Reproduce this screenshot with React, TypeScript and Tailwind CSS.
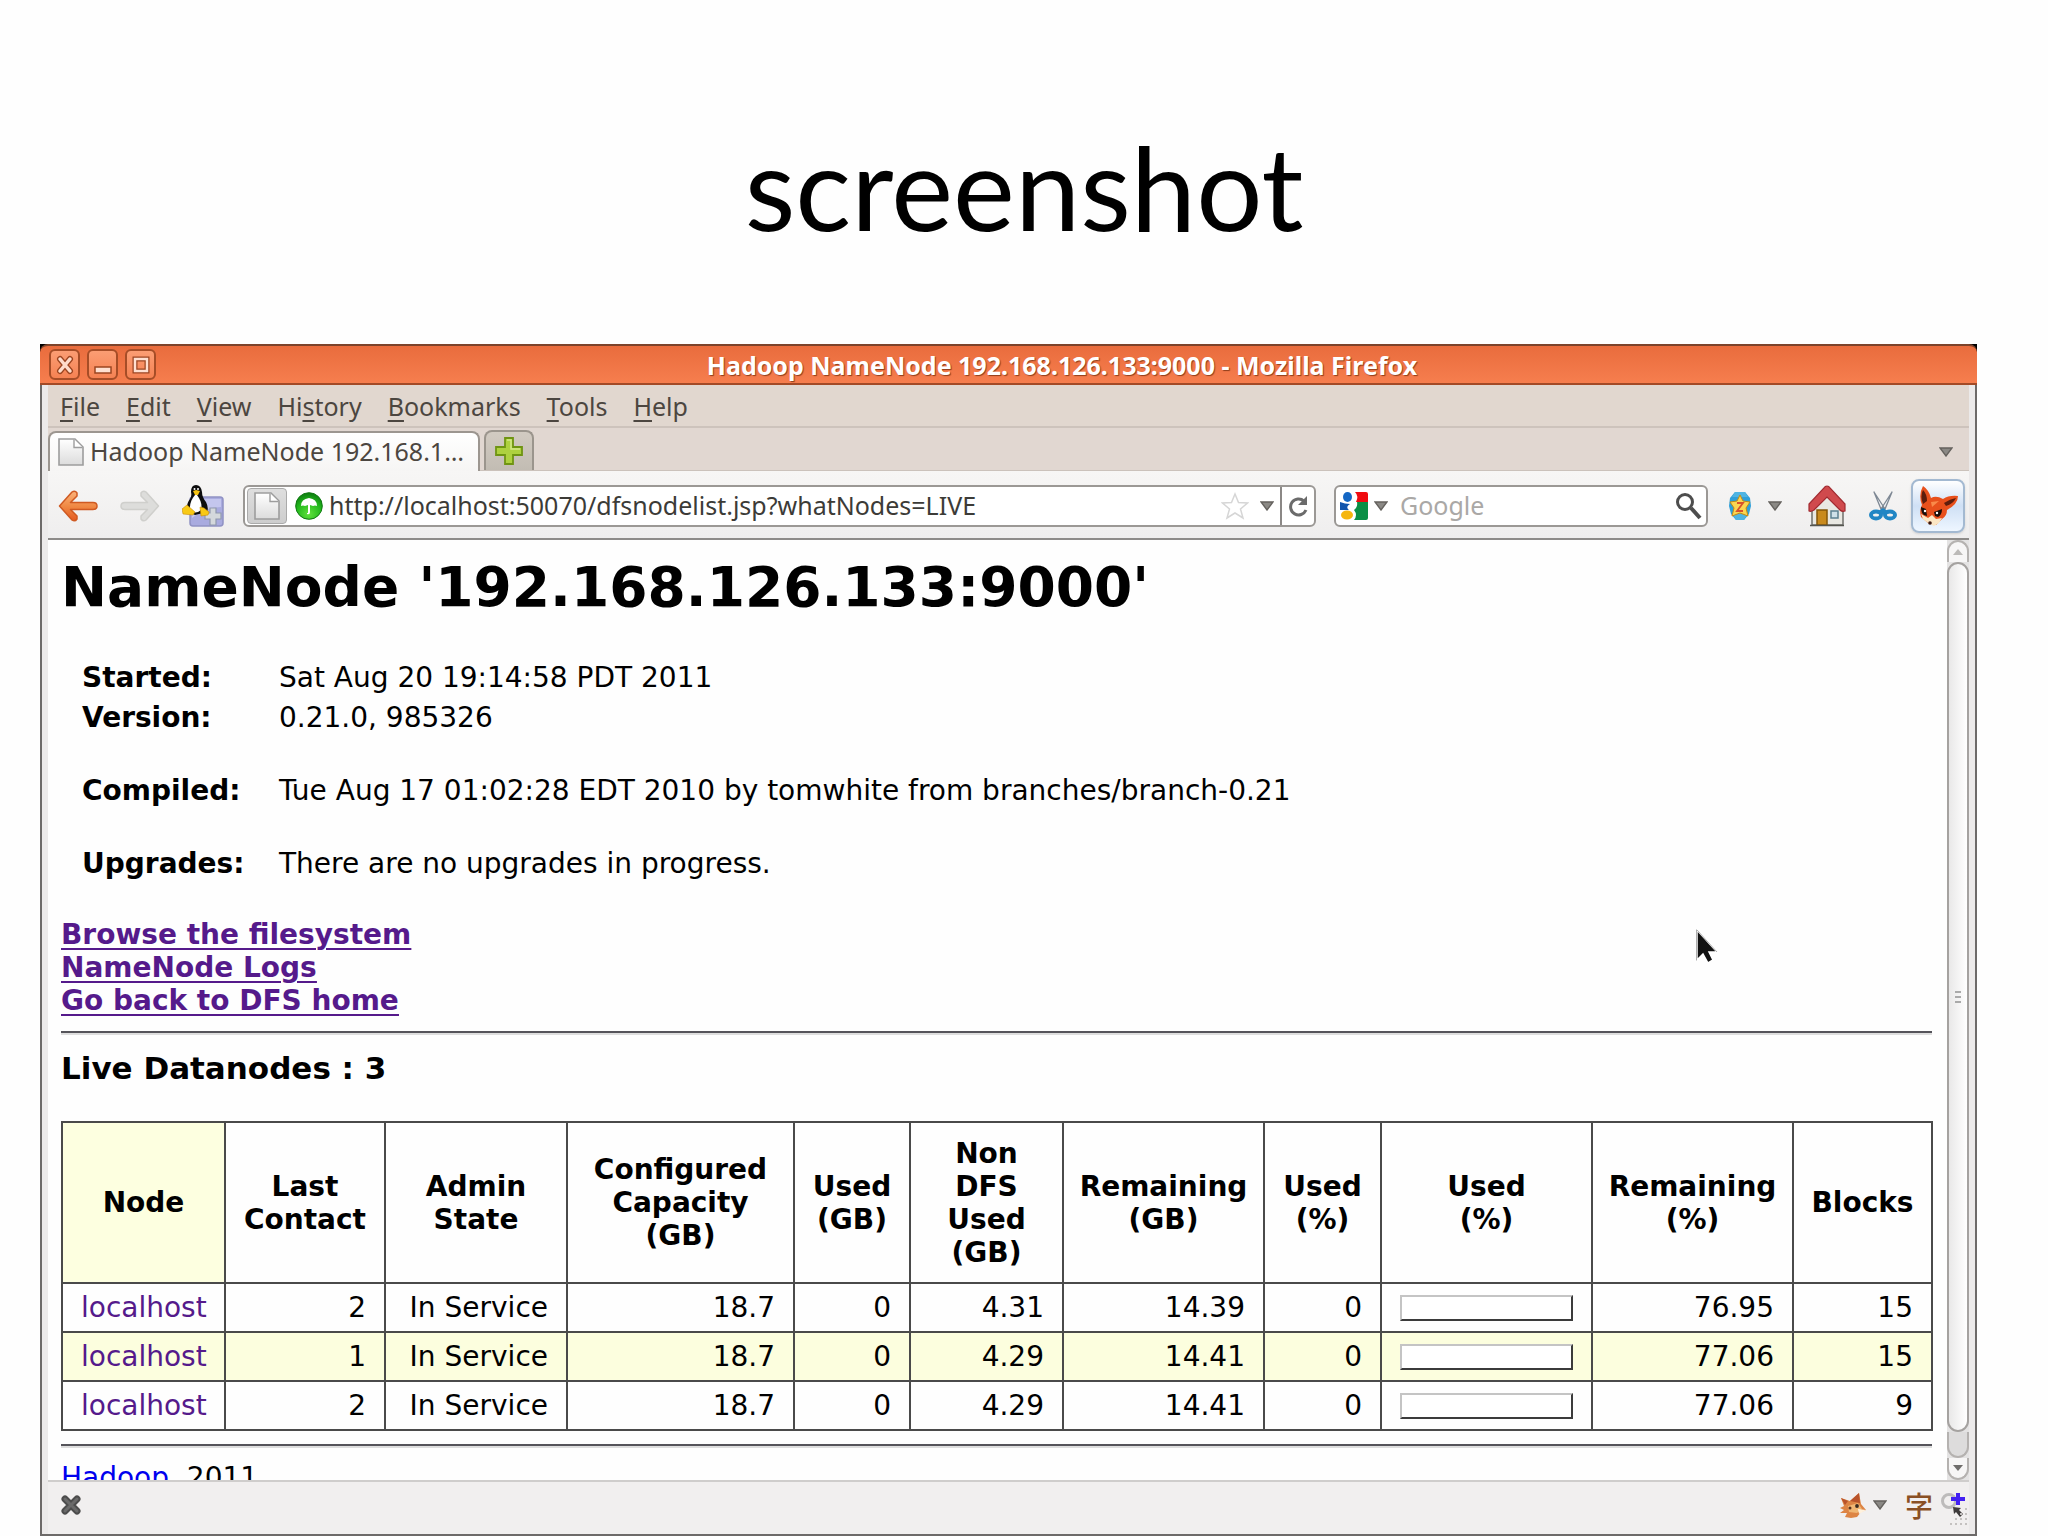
import type { ReactNode } from 'react';

const MENUS = [
  { before: '', key: 'F', after: 'ile' },
  { before: '', key: 'E', after: 'dit' },
  { before: '', key: 'V', after: 'iew' },
  { before: 'Hi', key: 's', after: 'tory' },
  { before: '', key: 'B', after: 'ookmarks' },
  { before: '', key: 'T', after: 'ools' },
  { before: '', key: 'H', after: 'elp' },
];

const COLUMNS = [
  { lines: ['Node'], width: 'w-[163px]' },
  { lines: ['Last', 'Contact'], width: 'w-[160px]' },
  { lines: ['Admin', 'State'], width: 'w-[182px]' },
  { lines: ['Configured', 'Capacity', '(GB)'], width: 'w-[227px]' },
  { lines: ['Used', '(GB)'], width: 'w-[116px]' },
  { lines: ['Non', 'DFS', 'Used', '(GB)'], width: 'w-[153px]' },
  { lines: ['Remaining', '(GB)'], width: 'w-[201px]' },
  { lines: ['Used', '(%)'], width: 'w-[117px]' },
  { lines: ['Used', '(%)'], width: 'w-[211px]' },
  { lines: ['Remaining', '(%)'], width: 'w-[201px]' },
  { lines: ['Blocks'], width: 'w-[139px]' },
];

const NODES = [
  { contact: '2', capacity: '18.7', used: '0', nonDfs: '4.31', remaining: '14.39', usedPct: 0, remainingPct: '76.95', blocks: '15' },
  { contact: '1', capacity: '18.7', used: '0', nonDfs: '4.29', remaining: '14.41', usedPct: 0, remainingPct: '77.06', blocks: '15' },
  { contact: '2', capacity: '18.7', used: '0', nonDfs: '4.29', remaining: '14.41', usedPct: 0, remainingPct: '77.06', blocks: '9' },
];

function Caret({ className = '' }: { className?: string }) {
  return (
    <svg viewBox="0 0 14 10" className={`h-[10px] w-[14px] shrink-0 ${className}`} aria-hidden="true">
      <path d="M1 1h12L7 9z" fill="#8b8985" stroke="#65625e" strokeWidth="1.4" />
    </svg>
  );
}

function PageIcon({ className = '' }: { className?: string }) {
  return (
    <svg viewBox="0 0 26 28" className={`h-7 w-[26px] shrink-0 ${className}`} aria-hidden="true">
      <defs>
        <linearGradient id="paper" x1="0" y1="0" x2="0" y2="1">
          <stop offset="0" stopColor="#fff" />
          <stop offset="1" stopColor="#dcdcdc" />
        </linearGradient>
      </defs>
      <path d="M1 1h16l8 8v18H1z" fill="url(#paper)" stroke="#9d9d9d" strokeWidth="1.6" />
      <path d="M16 1.500v8h8.500" fill="#fff" stroke="#9d9d9d" strokeWidth="1.4" />
    </svg>
  );
}

function ArrowIcon({ flip = false }: { flip?: boolean }) {
  return (
    <svg viewBox="0 0 40 32" className="h-8 w-10" aria-hidden="true">
      <defs>
        <linearGradient id="orangeArrow" x1="0" y1="0" x2="0" y2="1">
          <stop offset="0" stopColor="#fbb27a" />
          <stop offset="0.5" stopColor="#f08a45" />
          <stop offset="1" stopColor="#e55a20" />
        </linearGradient>
      </defs>
      <path
        d="M1.500 16 14 2q3-2 5 1v3l-6.500 6.500H35q4 0 4 3.500t-4 3.500H12.500L19 26v3q-2 3-5 1z"
        transform={flip ? 'matrix(-1 0 0 1 40 0)' : undefined}
        fill={flip ? '#dddddb' : 'url(#orangeArrow)'}
        stroke={flip ? '#cfcfcc' : '#cf5a22'}
        strokeWidth="1.5"
        strokeLinejoin="round"
      />
    </svg>
  );
}

function PenguinIcon() {
  return (
    <svg viewBox="0 0 42 42" className="h-[42px] w-[42px]" aria-hidden="true">
      <rect x="8" y="12" width="33" height="29" rx="3" fill="#a9abdf" stroke="#9092c4" strokeWidth="1.5" />
      <path d="M10 14h29v8q-15 0-29 11z" fill="#c4c6ee" />
      <path d="M28 23h6v5h5v6h-5v6h-6v-6h-5v-6h5z" fill="#d4d8dc" stroke="#8f98ad" strokeWidth="1.2" />
      <path d="M9 7q0-7 5-7t6 7q0 5 4 10 3 6 1 10l-12 3-8-4q-1-7 3-12 2-3 1-7z" fill="#0d0d0d" />
      <path d="M13 10q-6 7-5 15 5 5 11 0 2-7-4-15z" fill="#fff" />
      <path d="m11 6 3-1 4 1-2 4h-3z" fill="#f5c211" />
      <circle cx="12.500" cy="4" r="1" fill="#fff" />
      <circle cx="16" cy="4" r="1" fill="#fff" />
      <path d="m0 24 5-4 8 7-2 3-10-1zM18 22l4 1 5 4-1 3-7 1z" fill="#f8c915" stroke="#c98f08" strokeWidth=".6" />
    </svg>
  );
}

function UmbrellaIcon() {
  return (
    <svg viewBox="0 0 28 28" className="h-7 w-7 shrink-0" aria-hidden="true">
      <defs>
        <radialGradient id="greenBall" cx=".5" cy=".8" r=".8">
          <stop offset="0" stopColor="#5fe03c" />
          <stop offset=".6" stopColor="#22b81c" />
          <stop offset="1" stopColor="#0c7a10" />
        </radialGradient>
      </defs>
      <circle cx="14" cy="14" r="13.300" fill="url(#greenBall)" stroke="#127a14" />
      <path d="M6 14q0-7 8-8 8 1 8 8-2-1-4 0l-3-1v7q0 3-3 2v-1h1v-8l-3 1q-2-1-4 0z" fill="#fff" />
    </svg>
  );
}

function GoogleIcon() {
  return (
    <svg viewBox="0 0 28 28" className="h-7 w-7 shrink-0" aria-hidden="true">
      <path d="M16 0h10q2 0 2 2v8H16q3-6-1-10z" fill="#f00b10" />
      <path d="M17 10h11v16q0 2-2 2H14q4-5 0-10 4-3 3-8z" fill="#0a8f45" />
      <ellipse cx="7.500" cy="5" rx="4.500" ry="5" fill="#1467c4" />
      <path d="M0 10q5 2 10 2-5 3-1 6H0z" fill="#1155ad" />
      <ellipse cx="7" cy="23" rx="6" ry="4.600" fill="#f5b60d" />
    </svg>
  );
}

function StarGlobeIcon() {
  return (
    <svg viewBox="0 0 24 30" className="h-[30px] w-6" aria-hidden="true">
      <path d="m7 1 10 0 5 6 1 8-2 8-5 6H8l-5-6-2-8 1-8z" fill="#2f9fd8" />
      <path d="M7 1h10l3 5H4zM4 22h16l-4 7H8z" fill="#4fb4e2" />
      <path d="m12 4 3 6 7 1-4 6 2 8-8-3-8 3 2-8-4-6 7-1z" fill="#fbd551" stroke="#c28a14" />
      <path d="M9 12h6l-6 8h6" fill="none" stroke="#d8512c" strokeWidth="1.8" />
    </svg>
  );
}

function HouseIcon() {
  return (
    <svg viewBox="0 0 38 42" className="h-[42px] w-[38px]" aria-hidden="true">
      <path d="M4 20 19 8l16 12v20H4z" fill="#e9e8e2" stroke="#6f6f6b" strokeWidth="1.500" />
      <path d="M19 1q2 0 3 2l15 16v7q-3 1-5-1L19 12 6 25q-3 2-5 1v-7L16 3q1-2 3-2z" fill="#d04a4d" stroke="#a12a30" strokeWidth="1.200" />
      <rect x="9" y="25" width="10" height="15" fill="#c98a1d" stroke="#845608" strokeWidth="1.500" />
      <rect x="23" y="26" width="7" height="7" fill="#cfe0e8" stroke="#5c8091" strokeWidth="1.500" />
      <path d="M2 40.500h34" stroke="#55564f" strokeWidth="1.500" />
    </svg>
  );
}

function ScissorsIcon() {
  return (
    <svg viewBox="0 0 28 30" className="h-[30px] w-7" aria-hidden="true">
      <path d="m5 1 11 17h-4zM23 1 12 18h4z" fill="#eef1f4" stroke="#7d8793" strokeWidth="1.300" strokeLinejoin="round" />
      <ellipse cx="7" cy="24" rx="5" ry="3.500" fill="none" stroke="#2186c4" strokeWidth="4" />
      <ellipse cx="21" cy="24" rx="5" ry="3.500" fill="none" stroke="#2186c4" strokeWidth="4" />
      <path d="m9 20 5-3 5 3-5 4z" fill="#2186c4" />
    </svg>
  );
}

function FoxIcon() {
  return (
    <svg viewBox="0 0 42 42" className="h-[42px] w-[42px]" aria-hidden="true">
      <path d="M6 1q6 4 8 12 5-3 12 1 6-4 15-3 0 8-11 14 0 6-5 9l-6 6-8-2-7-6q-2-7 1-12Q1 10 6 1z" fill="#e8501c" />
      <path d="M6 5q4 4 4 11l-4 3Q3 11 6 5zM39 13q-3 6-10 8l-2-3q6-4 12-5z" fill="#5d1d0d" />
      <path d="m4 29 7 4 4-3 4 4 6-1-3 5-5 3-6-3-5-4z" fill="#fbe6c4" />
      <path d="m4 22 5 2 1 7-3-1q-3-2-3-8zM17 27l8-3q0 6-4 8l-3-1z" fill="#1a0e0a" />
      <circle cx="8" cy="26" r="1.200" fill="#fff" />
      <circle cx="20" cy="28" r="1.200" fill="#fff" />
      <circle cx="13" cy="38" r="1.800" fill="#3a140c" />
      <path d="m14 17 8-1-7 6z" fill="#f98a4a" />
    </svg>
  );
}

function FoxFaceIcon() {
  return (
    <svg viewBox="0 0 28 27" className="h-[27px] w-7" aria-hidden="true">
      <path d="m2 6 9 3 9-8 2 11 5 6-5 2-4 5-6 1-6-1 2-4-7 0 4-3-4-2 4-2z" fill="#dd8444" />
      <path d="m11 9 9-8 1 10zM2 6l7 3-3 4z" fill="#b9532b" />
      <path d="m9 14 10-3 4 6-5 4-8-1z" fill="#f0b673" />
      <path d="m19 17 8 1-7 4z" fill="#fff1dd" />
      <circle cx="18" cy="14" r="1.900" fill="#3b2a1f" />
      <circle cx="11" cy="16" r="1.500" fill="#5b321d" />
    </svg>
  );
}

function ZoomPlusIcon() {
  return (
    <svg viewBox="0 0 24 27" className="h-[27px] w-6" aria-hidden="true">
      <circle cx="8" cy="9" r="6.500" fill="none" stroke="#bdbbbb" strokeWidth="3" />
      <path d="m12 15 8 1-2 2 4 4-3 3-4-5-2 2z" fill="#3e3a3a" />
      <path d="M15 1h4v4h5v4h-5v4h-4V9h-5V5h5z" fill="#4320f2" />
    </svg>
  );
}

function TitleButton({ label, children }: { label: string; children: ReactNode }) {
  return (
    <button
      type="button"
      aria-label={label}
      className="flex h-[31px] w-[31px] items-center justify-center rounded-md border-2 border-[#a64d27] bg-linear-to-b from-[#fb9d73] to-[#f58253]"
    >
      <svg viewBox="0 0 20 20" className="h-5 w-5" fill="none" aria-hidden="true">
        {children}
      </svg>
    </button>
  );
}

function TitleBar() {
  return (
    <div className="flex h-[41px] shrink-0 items-center rounded-t-lg border-t-2 border-b-2 border-t-[#7c432b] border-b-[#a34a26] bg-linear-to-b from-[#e96c3d] to-[#f67e4e] px-[9px]">
      <div className="flex gap-[7px]">
        <TitleButton label="Close">
          <path d="m5 4 10 12M15 4 5 16" stroke="#9c4521" strokeWidth="6" strokeLinecap="round" />
          <path d="m5 4 10 12M15 4 5 16" stroke="#ffdccb" strokeWidth="3.500" strokeLinecap="round" />
        </TitleButton>
        <TitleButton label="Minimize">
          <rect x="2" y="12" width="16" height="6" fill="#ffe0d1" stroke="#9c4521" strokeWidth="1.500" />
        </TitleButton>
        <TitleButton label="Maximize">
          <rect x="4" y="4" width="12" height="12" stroke="#9c4521" strokeWidth="5" />
          <rect x="4" y="4" width="12" height="12" stroke="#ffe0d1" strokeWidth="2.500" />
        </TitleButton>
      </div>
      <div className="flex-1 pt-[2px] text-center font-bold text-white [text-shadow:1px_1px_1px_#8f3d1b]">
        Hadoop NameNode 192.168.126.133:9000 - Mozilla Firefox
      </div>
    </div>
  );
}

function MenuBar() {
  return (
    <nav className="flex h-[43px] shrink-0 items-center gap-[26px] border-b-2 border-[#cdc3bc] bg-[#e1d7cf] pt-[2px] pl-3" aria-label="Menu">
      {MENUS.map((menu) => (
        <button key={menu.key + menu.after} type="button">
          {menu.before}
          <span className="underline decoration-2 underline-offset-4">{menu.key}</span>
          {menu.after}
        </button>
      ))}
    </nav>
  );
}

function TabStrip() {
  return (
    <div className="flex h-[43px] shrink-0 items-end border-b border-[#cbc2bb] bg-[#e1d7d1]">
      <button
        type="button"
        className="-mb-px flex h-10 w-[432px] items-center gap-[6px] rounded-t-lg border-2 border-b-0 border-[#9c9690] bg-linear-to-b from-white to-[#f6f5f4] pl-2 whitespace-nowrap"
      >
        <PageIcon />
        Hadoop NameNode 192.168.1…
      </button>
      <button
        type="button"
        aria-label="New tab"
        className="ml-1 flex h-10 w-[50px] items-center justify-center rounded-t-lg border-2 border-b-0 border-[#9b958d] bg-linear-to-b from-[#d2cbc2] to-[#c2bcb3]"
      >
        <svg viewBox="0 0 28 28" className="h-7 w-7" aria-hidden="true">
          <path d="M10 1h8v9h9v8h-9v9h-8v-9H1v-8h9z" fill="#aed13f" stroke="#6f9413" strokeWidth="1.800" />
          <path d="M12 3h4v9h9" fill="none" stroke="#d3e98a" strokeWidth="1.500" />
        </svg>
      </button>
      <button type="button" aria-label="List all tabs" className="mr-4 ml-auto flex h-10 items-center pt-[3px]">
        <Caret />
      </button>
    </div>
  );
}

function Toolbar() {
  return (
    <div className="flex h-[69px] shrink-0 items-center border-b-2 border-[#8d8b89] bg-linear-to-b from-[#f7f6f5] to-[#efeeee] pt-[2px] pl-[10px]">
      <div className="flex w-[185px] shrink-0 items-center gap-[22px]">
        <button type="button" aria-label="Back"><ArrowIcon /></button>
        <button type="button" aria-label="Forward"><ArrowIcon flip /></button>
        <button type="button" aria-label="Linux add-on"><PenguinIcon /></button>
      </div>
      <div className="flex h-[42px] flex-1 items-center rounded-md border-2 border-[#9b9895] bg-white pl-[2px]">
        <button
          type="button"
          aria-label="Site identity"
          className="flex h-9 w-10 shrink-0 items-center justify-center rounded-sm border border-[#aaa] bg-linear-to-b from-[#dedede] to-[#cdcdcd]"
        >
          <PageIcon />
        </button>
        <span className="mr-[6px] ml-2"><UmbrellaIcon /></span>
        <input
          type="text"
          aria-label="Address"
          defaultValue="http://localhost:50070/dfsnodelist.jsp?whatNodes=LIVE"
          className="min-w-0 flex-1 bg-transparent text-[#3c3b37] outline-none"
        />
        <button type="button" aria-label="Bookmark this page">
          <svg viewBox="0 0 28 28" className="h-7 w-7" aria-hidden="true">
            <path d="m14 2 3.500 8.500 9 .5-7 6 2.500 9-8-5-8 5 2.500-9-7-6 9-.5z" fill="#fff" stroke="#d6d6d6" strokeWidth="1.500" />
          </svg>
        </button>
        <button type="button" aria-label="History" className="pr-[6px] pl-[11px]"><Caret /></button>
        <button type="button" aria-label="Reload" className="flex h-full w-[34px] items-center justify-center border-l-2 border-[#8b8886]">
          <svg viewBox="0 0 22 22" className="h-[22px] w-[22px]" fill="none" aria-hidden="true">
            <path d="M17 6a8 8 0 1 0 2 9" stroke="#6b6b6b" strokeWidth="3" />
            <path d="M20 1v9h-9z" fill="#6b6b6b" />
          </svg>
        </button>
      </div>
      <div className="ml-[18px] flex h-[42px] w-[374px] shrink-0 items-center rounded-md border-2 border-[#9b9895] bg-white px-1">
        <GoogleIcon />
        <Caret className="mx-[6px]" />
        <input
          type="text"
          aria-label="Search"
          placeholder="Google"
          className="ml-[6px] min-w-0 flex-1 bg-transparent outline-none placeholder:text-[#aaa8a6]"
        />
        <button type="button" aria-label="Go">
          <svg viewBox="0 0 28 28" className="h-7 w-7" fill="none" aria-hidden="true">
            <circle cx="11" cy="10" r="7.500" stroke="#4d4d4d" strokeWidth="3" />
            <path d="m17 16 9 10" stroke="#4d4d4d" strokeWidth="4" />
          </svg>
        </button>
      </div>
      <div className="flex shrink-0 items-center pr-1 pl-5">
        <button type="button" aria-label="Star globe"><StarGlobeIcon /></button>
        <Caret className="mr-[26px] ml-4" />
        <button type="button" aria-label="Home"><HouseIcon /></button>
        <button type="button" aria-label="Clip" className="mr-[14px] ml-[23px]"><ScissorsIcon /></button>
        <button
          type="button"
          aria-label="Fox"
          className="flex h-[54px] w-[54px] items-center justify-center rounded-lg border-2 border-[#a3b9d1] bg-linear-to-b from-white via-[#cfe0f5] to-[#eef6ff] shadow-sm"
        >
          <FoxIcon />
        </button>
      </div>
    </div>
  );
}

function InfoRow({ label, value, spaced = false }: { label: string; value: string; spaced?: boolean }) {
  const pad = spaced ? 'pt-[37px] pb-[3px]' : 'pt-1 pb-[3px]';
  return (
    <tr>
      <th scope="row" className={`w-[218px] pl-[21px] text-left font-bold ${pad}`}>{label}</th>
      <td className={pad}>{value}</td>
    </tr>
  );
}

function UsageBar({ percent }: { percent: number }) {
  return (
    <div
      role="progressbar"
      aria-label="Used"
      aria-valuenow={percent}
      aria-valuemin={0}
      aria-valuemax={100}
      className="h-[26px] border-2 border-t-[#c4c4c4] border-r-[#3b3b3b] border-b-[#3b3b3b] border-l-[#c4c4c4] bg-white"
    >
      <div className="h-full bg-blue-500" style={{ width: `${percent}%` }} />
    </div>
  );
}

const CELL = 'border-2 border-[#4a4a4a] px-[18px] py-[7px]';

function NodeTable() {
  return (
    <table className="mt-[35px] w-full table-fixed border-collapse text-right">
      <thead>
        <tr className="h-[161px]">
          {COLUMNS.map((col, i) => (
            <th
              key={i}
              scope="col"
              className={`border-2 border-[#4a4a4a] text-center font-bold first:bg-[#fdffe0] ${col.width}`}
            >
              {col.lines.map((line) => (
                <div key={line}>{line}</div>
              ))}
            </th>
          ))}
        </tr>
      </thead>
      <tbody>
        {NODES.map((node, i) => (
          <tr key={i} className="even:bg-[#fcfede]">
            <td className={`${CELL} text-left`}><a href="#node" className="text-[#551a8b]">localhost</a></td>
            <td className={CELL}>{node.contact}</td>
            <td className={CELL}>In Service</td>
            <td className={CELL}>{node.capacity}</td>
            <td className={CELL}>{node.used}</td>
            <td className={CELL}>{node.nonDfs}</td>
            <td className={CELL}>{node.remaining}</td>
            <td className={CELL}>{node.usedPct}</td>
            <td className={CELL}><UsageBar percent={node.usedPct} /></td>
            <td className={CELL}>{node.remainingPct}</td>
            <td className={CELL}>{node.blocks}</td>
          </tr>
        ))}
      </tbody>
    </table>
  );
}

function Rule({ className }: { className: string }) {
  return <hr className={`h-1 border-t-2 border-b-2 border-t-[#55545a] border-b-[#dedede] ${className}`} />;
}

function NameNodePage() {
  return (
    <main className="min-w-0 flex-1 overflow-hidden bg-[#fefefe] pt-[15px] pr-[15px] pl-[13px] font-['DejaVu_Sans',sans-serif] text-[28px] leading-[33px] text-black">
      <h1 className="text-[55px] leading-[64px] font-bold">NameNode '192.168.126.133:9000'</h1>
      <table className="mt-[38px] w-full border-collapse">
        <tbody>
          <InfoRow label="Started:" value="Sat Aug 20 19:14:58 PDT 2011" />
          <InfoRow label="Version:" value="0.21.0, 985326" />
          <InfoRow label="Compiled:" value="Tue Aug 17 01:02:28 EDT 2010 by tomwhite from branches/branch-0.21" spaced />
          <InfoRow label="Upgrades:" value="There are no upgrades in progress." spaced />
        </tbody>
      </table>
      <div className="mt-[35px] flex flex-col items-start font-bold text-[#551a8b] underline decoration-2 underline-offset-4">
        <a href="#browse">Browse the filesystem</a>
        <a href="#logs">NameNode Logs</a>
        <a href="#home">Go back to DFS home</a>
      </div>
      <Rule className="mt-[14px]" />
      <h3 className="mt-[15px] text-[31px] leading-9 font-bold">Live Datanodes : 3</h3>
      <NodeTable />
      <Rule className="mt-[13px]" />
      <p className="mt-[13px]">
        <a href="#hadoop" className="text-[#0000ee] underline decoration-2 underline-offset-4">Hadoop</a>, 2011.
      </p>
    </main>
  );
}

function Scrollbar() {
  return (
    <div className="flex w-[22px] shrink-0 flex-col bg-[#e4e3e3]" aria-hidden="true">
      <div className="flex h-[22px] items-center justify-center rounded-t-full border-2 border-b-0 border-[#b5b2b0] bg-[#f7f6f6]">
        <svg viewBox="0 0 10 6" className="h-[6px] w-[10px]">
          <path d="M5 0l5 6H0z" fill="#bcbab8" />
        </svg>
      </div>
      <div className="flex flex-1 flex-col items-center justify-center gap-[3px] rounded-full border-2 border-[#a5a2a0] bg-linear-to-r from-[#e9e8e8] to-white">
        <span className="h-[2px] w-[6px] bg-[#aaa]" />
        <span className="h-[2px] w-[6px] bg-[#aaa]" />
        <span className="h-[2px] w-[6px] bg-[#aaa]" />
      </div>
      <div className="h-[26px] rounded-b-full border-x-2 border-b-2 border-[#b5b2b0] bg-[#dddcdc]" />
      <div className="flex h-[22px] items-center justify-center rounded-b-full border-2 border-t-0 border-[#b5b2b0] bg-[#f7f6f6]">
        <svg viewBox="0 0 10 6" className="h-[6px] w-[10px]">
          <path d="M0 0h10L5 6z" fill="#6f6d6b" />
        </svg>
      </div>
    </div>
  );
}

function StatusBar() {
  return (
    <footer className="flex h-[54px] shrink-0 items-center border-t-2 border-[#cfcdcc] bg-[#f1efef] pb-[6px] pl-3">
      <button type="button" aria-label="Close add-on bar">
        <svg viewBox="0 0 22 22" className="h-[22px] w-[22px]" aria-hidden="true">
          <path d="m5 5 12 12M17 5 5 17" stroke="#4c4c4c" strokeWidth="7" strokeLinecap="round" />
          <path d="m5 5 12 12M17 5 5 17" stroke="#6a6a6a" strokeWidth="3" strokeLinecap="round" />
        </svg>
      </button>
      <div className="ml-auto flex items-center">
        <button type="button" aria-label="Fox status"><FoxFaceIcon /></button>
        <Caret className="mr-[18px] ml-[6px]" />
        <button type="button" className="mr-2 font-['Noto_Sans_CJK_JP',sans-serif] text-[28px] leading-8 font-medium text-[#8a5024]">字</button>
        <button type="button" aria-label="Zoom in"><ZoomPlusIcon /></button>
      </div>
      <svg viewBox="0 0 20 20" className="-ml-4 h-5 w-5 self-end" fill="#c4c1c0" aria-hidden="true">
        <path d="M16 0h2v2h-2zM11 5h2v2h-2zM16 5h2v2h-2zM6 10h2v2H6zM11 10h2v2h-2zM16 10h2v2h-2zM1 15h2v2H1zM6 15h2v2H6zM11 15h2v2h-2zM16 15h2v2h-2z" />
      </svg>
    </footer>
  );
}

export default function App() {
  return (
    <div className="flex h-screen flex-col overflow-hidden bg-[#fefefe]">
      <header className="flex h-[344px] shrink-0 items-center justify-center pt-7">
        <h2 className="font-['Lato',sans-serif] text-[117px] leading-[137px] text-black">screenshot</h2>
      </header>

      <div className="relative mr-[71px] ml-10 flex min-h-0 flex-1 flex-col bg-black font-['Noto_Sans',sans-serif] text-[25px] text-[#4c4640]">
        <TitleBar />
        <div className="flex min-h-0 flex-1 flex-col border-2 border-t-0 border-[#6d6a69] bg-[#eceaea] px-[6px]">
          <MenuBar />
          <TabStrip />
          <Toolbar />
          <div className="flex min-h-0 flex-1">
            <NameNodePage />
            <Scrollbar />
          </div>
          <StatusBar />
        </div>

        {/* Mouse pointer */}
        <svg viewBox="0 0 22 34" className="absolute top-[585px] left-[1656px] h-[34px] w-[22px]" aria-hidden="true">
          <path d="M1 1v30l6-6 5 9 5-3-4-8h8z" fill="#111" stroke="#fff" strokeWidth="1.500" />
          <path d="M.5.5v31M1 1l20 22" stroke="#999" strokeWidth=".8" />
        </svg>
      </div>
    </div>
  );
}
